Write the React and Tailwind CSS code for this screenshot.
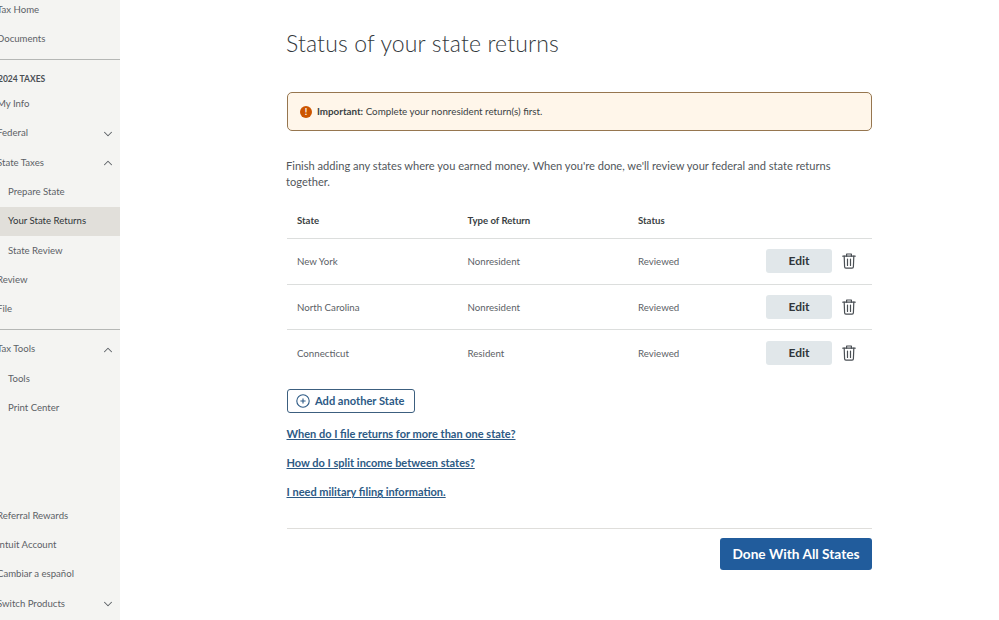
import { ChevronDown, ChevronUp } from "lucide-react";

const navArriba = [
  { texto: "Tax Home" },
  { texto: "Documents" },
];

const navImpuestos = [
  { texto: "My Info" },
  { texto: "Federal", flecha: "abajo" },
  { texto: "State Taxes", flecha: "arriba" },
  { texto: "Prepare State", sub: true },
  { texto: "Your State Returns", sub: true, activo: true },
  { texto: "State Review", sub: true },
  { texto: "Review" },
  { texto: "File" },
];

const navTools = [
  { texto: "Tax Tools", flecha: "arriba" },
  { texto: "Tools", sub: true },
  { texto: "Print Center", sub: true },
];

const navAbajo = [
  { texto: "Referral Rewards" },
  { texto: "Intuit Account" },
  { texto: "Cambiar a español" },
  { texto: "Switch Products", flecha: "abajo" },
];

const estados = [
  { nombre: "New York", tipo: "Nonresident" },
  { nombre: "North Carolina", tipo: "Nonresident" },
  { nombre: "Connecticut", tipo: "Resident" },
];

const links = [
  "When do I file returns for more than one state?",
  "How do I split income between states?",
  "I need military filing information.",
];

function NavItem({ texto, flecha, sub, activo }) {
  return (
    <div
      className={`flex h-[29.3px] items-center justify-between pr-[5px] text-[9.6px] ${
        sub ? "pl-2" : "-ml-[3px]"
      } ${activo ? "bg-[#e1dfda] text-[#2f3438]" : "text-[#5c6166]"}`}
    >
      <span>{texto}</span>
      {flecha === "abajo" && <ChevronDown size={14} strokeWidth={1.8} />}
      {flecha === "arriba" && <ChevronUp size={14} strokeWidth={1.8} />}
    </div>
  );
}

function Sidebar() {
  return (
    <aside className="flex h-[620px] w-[120px] shrink-0 flex-col overflow-hidden bg-[#f4f4f2]">
      <div className="-mt-[4.5px]">
        {navArriba.map((item) => (
          <NavItem key={item.texto} {...item} />
        ))}
      </div>
      <div className="mt-[4.5px] border-t border-[#b5b7b5] pt-[5.5px]">
        <div className="-ml-[2px] flex h-[29px] items-center text-[8.5px] font-bold text-[#4a4f54]">
          2024 TAXES
        </div>
        <div className="-mt-[4.5px]">
          {navImpuestos.map((item) => (
            <NavItem key={item.texto} {...item} />
          ))}
        </div>
      </div>
      <div className="mt-[5px] border-t border-[#b5b7b5] pt-[5px]">
        {navTools.map((item) => (
          <NavItem key={item.texto} {...item} />
        ))}
      </div>
      <div className="mt-auto mb-[1.5px]">
        {navAbajo.map((item) => (
          <NavItem key={item.texto} {...item} />
        ))}
      </div>
    </aside>
  );
}

function Basura() {
  return (
    <svg width="14" height="16" viewBox="0 0 14 16" fill="none" stroke="#4a4f54" strokeWidth="1.2" strokeLinecap="round" strokeLinejoin="round">
      <path d="M.8 3.2h12.4" />
      <path d="M4.6 3.2V1h4.8v2.2" />
      <path d="M2.2 3.2l.4 10.6c0 .8.5 1.4 1.3 1.4h6.2c.8 0 1.3-.6 1.3-1.4l.4-10.6" />
      <path d="M5.5 6v6.4M8.5 6v6.4" />
    </svg>
  );
}

function Fila({ nombre, tipo, ultima }) {
  return (
    <div
      className={`grid h-[45.7px] grid-cols-[170.5px_170.5px_1fr] items-center pl-2.5 text-[9.7px] text-[#5c6166] ${
        ultima ? "" : "border-b border-[#dcdedd]"
      }`}
    >
      <span>{nombre}</span>
      <span>{tipo}</span>
      <div className="flex items-center justify-between pr-4">
        <span>Reviewed</span>
        <div className="flex items-center gap-[10px]">
          <button className="h-6 w-[66px] rounded-[3px] bg-[#e1e7ea] text-[12px] font-bold text-[#30363a]">
            Edit
          </button>
          <Basura />
        </div>
      </div>
    </div>
  );
}

export default function App() {
  return (
    <div className="flex h-[620px] w-[999px] overflow-hidden bg-white font-['Lato',sans-serif]">
      <Sidebar />
      <main className="ml-[167px] w-[585px]">
        <h1 className="-ml-[1px] mt-[27px] text-[23px] leading-[32px] font-light tracking-[0.15px] text-[#33383c]">
          Status of your state returns
        </h1>

        <div className="mt-[33px] flex h-[39px] items-center gap-[5px] rounded-[5px] border border-[#96764f] bg-[#fff6ea] pl-[12px] text-[9.8px] text-[#3a3f43]">
          <span className="flex h-[12px] w-[12px] items-center justify-center rounded-full bg-[#cc5500] text-[9px] font-bold leading-none text-white">
            !
          </span>
          <p>
            <b>Important:</b> Complete your nonresident return(s) first.
          </p>
        </div>

        <p className="-ml-[1px] mt-[27px] text-[11.1px] leading-[16px] text-[#52575c]">
          Finish adding any states where you earned money. When you're done, we'll review your federal and state returns together.
        </p>

        <div className="mt-[14px] grid h-[35px] grid-cols-[170.5px_170.5px_1fr] items-center border-b border-[#dcdedd] pl-2.5 text-[9.6px] font-bold text-[#3a3f43]">
          <span>State</span>
          <span>Type of Return</span>
          <span>Status</span>
        </div>

        {estados.map((e, i) => (
          <Fila key={e.nombre} {...e} ultima={i === estados.length - 1} />
        ))}

        <button className="mt-[13px] flex h-6 w-[128px] items-center gap-[6px] rounded-[3px] border border-[#3c5f7f] pl-[8px] text-[11.1px] font-bold text-[#2d5a85]">
          <svg width="14" height="14" viewBox="0 0 14 14" fill="none" stroke="#2d5a85" strokeWidth="1.1">
            <circle cx="7" cy="7" r="6.2" />
            <path d="M7 4.4v5.2M4.4 7h5.2" />
          </svg>
          <span className="-ml-[1px]">Add another State</span>
        </button>

        <div className="-ml-[0.5px] mt-[7px] flex flex-col">
          {links.map((l) => (
            <a key={l} className="flex h-[29px] items-center text-[11px] font-bold text-[#2d5a85] underline">
              {l}
            </a>
          ))}
        </div>

        <div className="mt-[21px] flex justify-end border-t border-[#dfdedb] pt-[9px]">
          <button className="h-[32px] w-[152px] rounded-[3px] bg-[#215c9c] text-[13.7px] font-bold text-white">
            Done With All States
          </button>
        </div>
      </main>
    </div>
  );
}
